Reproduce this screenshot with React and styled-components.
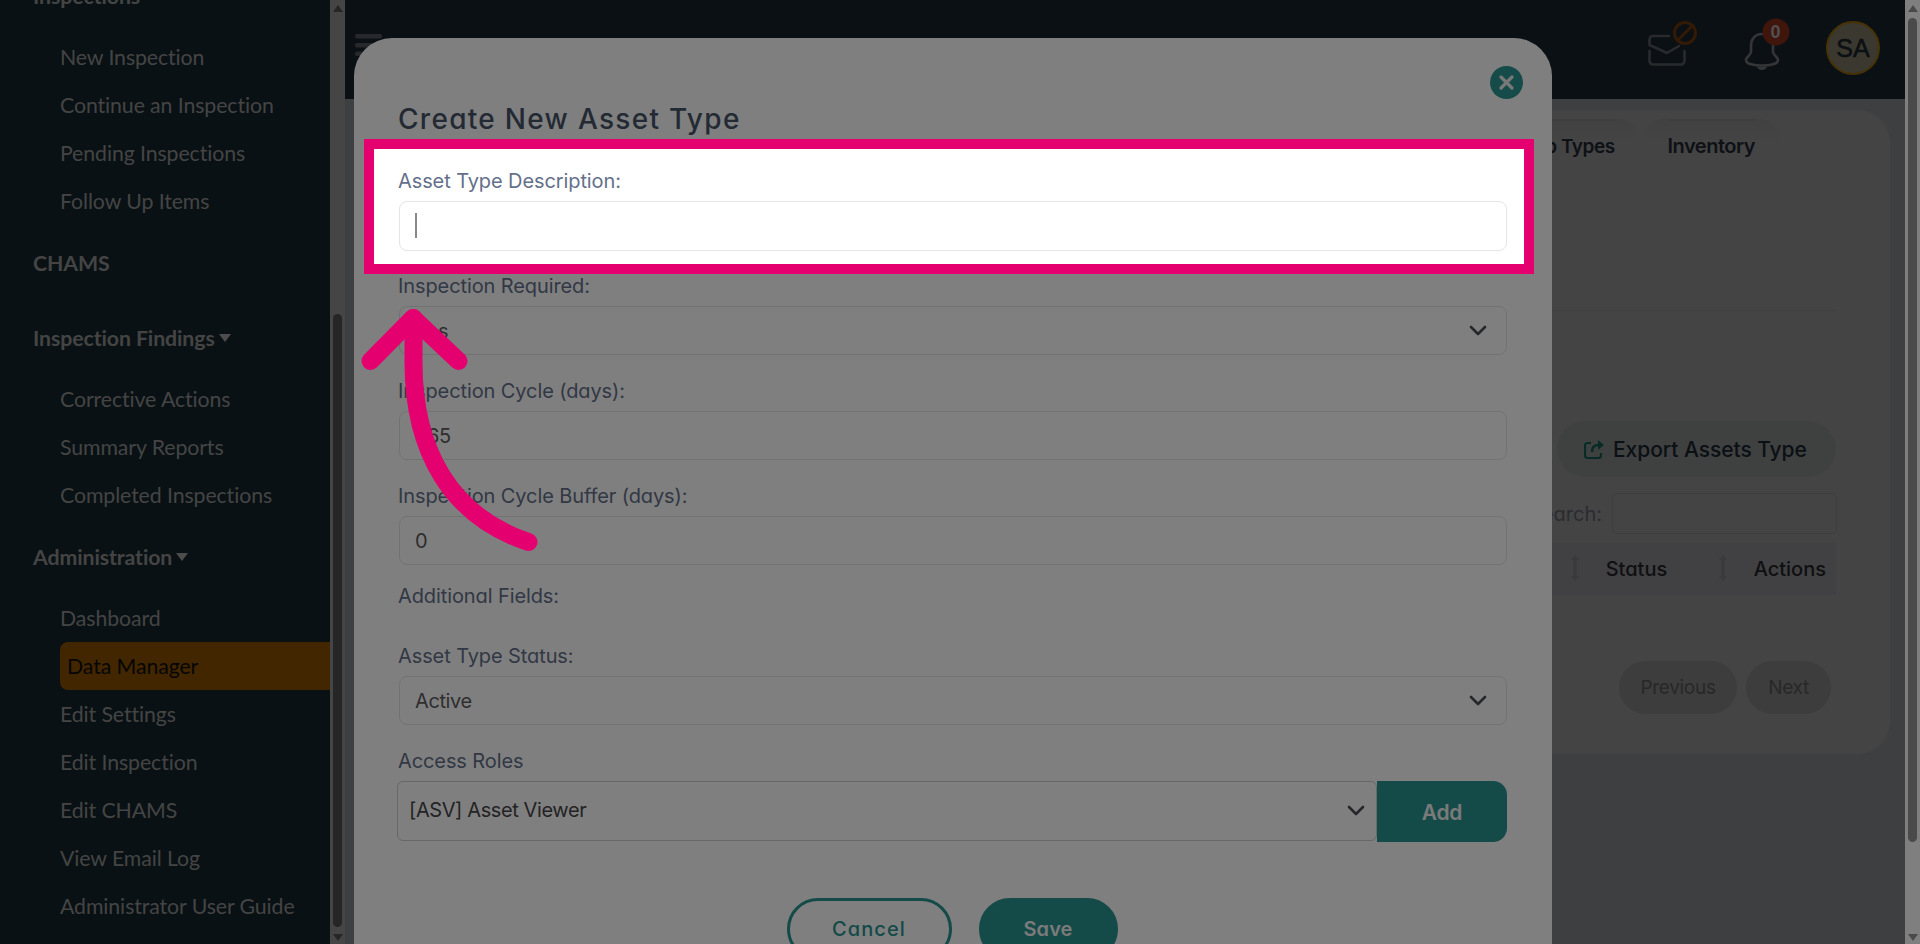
import React from "react";
import styled, { createGlobalStyle } from "styled-components";

const GlobalStyle = createGlobalStyle`
    * {
        box-sizing: border-box;
    }
    body {
        margin: 0;
        overflow: hidden;
        background: #7c7e81;
        font-family: Inter, "Liberation Sans", sans-serif;
        font-feature-settings: "cv11";
    }
    input, select, button {
        font: inherit;
    }
`;

const Screen = styled.div`
    position: relative;
    display: flex;
    width: 1920px;
    height: 944px;
    overflow: hidden;
`;

/* ---------- sidebar ---------- */

const Sidebar = styled.aside`
    width: 330px;
    height: 944px;
    overflow: hidden;
    background: #122228;
    font-family: Lato, sans-serif;
    font-size: 21.3px;
    font-variant-ligatures: none;
    letter-spacing: -0.1px;
    color: #898989;
`;

const Nav = styled.nav`
    margin-top: -42px;
`;

const NavHeading = styled.div`
    display: flex;
    align-items: center;
    gap: 4px;
    height: 75px;
    padding-left: 33px;
    font-weight: 700;
`;

const Caret = styled.span`
    border: 6.5px solid transparent;
    border-top: 8px solid #989898;
    border-bottom: 0;
`;

const NavItem = styled.div`
    display: flex;
    align-items: center;
    height: 48px;
    margin-left: 60px;
    padding-left: ${({ $active }) => ($active ? "7px" : "0")};
    border-radius: 8px 0 0 8px;
    background: ${({ $active }) => ($active ? "#844c00" : "transparent")};
    color: ${({ $active }) => ($active ? "#0c0c0c" : "inherit")};
`;

/* ---------- scrollbars ---------- */

const Scrollbar = styled.div`
    display: flex;
    flex-direction: column;
    align-items: center;
    width: 15px;
    height: 944px;
    padding: 5px 0 3px;
    background: ${({ $track }) => $track};
    color: ${({ $thumb }) => $thumb};
`;

const Arrow = styled.span`
    border: 5px solid transparent;
    border-top: ${({ $up }) => ($up ? "0" : "7px solid currentColor")};
    border-bottom: ${({ $up }) => ($up ? "7px solid currentColor" : "0")};
`;

const Thumb = styled.span`
    width: 9px;
    height: ${({ $height }) => $height};
    margin: ${({ $top }) => $top} 0 auto;
    border-radius: 5px;
    background: currentColor;
`;

/* ---------- page behind the modal ---------- */

const Main = styled.main`
    width: 1560px;
    height: 944px;
`;

const TopBar = styled.header`
    display: flex;
    align-items: center;
    height: 99px;
    padding: 0 25px 0 10px;
    background: #172029;
`;

const MenuIcon = styled.svg`
    margin: -8px auto 0 0;
`;

const MailIcon = styled.svg`
    margin-right: 47px;
    margin-top: -15px;
`;

const BellIcon = styled.svg`
    margin-right: 36px;
    margin-top: -10px;
`;

const Avatar = styled.div`
    display: grid;
    place-items: center;
    width: 54px;
    height: 54px;
    margin-top: -3px;
    border: 2.5px solid #8e6408;
    border-radius: 50%;
    background: #76705e;
    color: #172029;
    font: 400 25px "Liberation Sans", sans-serif;
    letter-spacing: 0;
    -webkit-text-stroke: 0.6px #172029;
`;

const Panel = styled.section`
    display: flex;
    flex-direction: column;
    align-items: flex-end;
    width: 1535px;
    height: 644px;
    margin: 11px 0 0 10px;
    padding: 9px 53px 0;
    border-radius: 32px;
    background: #888888;
`;

const Tabs = styled.div`
    display: flex;
    gap: 7px;
    height: 191px;
    margin-right: 58px;
    align-self: flex-end;
`;

const Tab = styled.div`
    height: 40px;
    padding: ${({ $padding }) => $padding};
    border-radius: 18px 18px 0 0;
    background: linear-gradient(#838383, #888888 22px);
    color: #1c232c;
    font-size: ${({ $size }) => $size};
    font-weight: 600;
    line-height: 51px;
    white-space: nowrap;
    letter-spacing: -0.5px;
    &::before {
        content: "";
        display: block;
        height: 2px;
        background: #7c7c7c;
    }
`;

const Divider = styled.div`
    width: 100%;
    height: 1px;
    background: #818181;
`;

const ExportButton = styled.button`
    display: flex;
    align-items: center;
    gap: 9px;
    width: 279px;
    height: 56px;
    margin: 110px 1px 16px 0;
    padding: 0 0 0 27px;
    border: 0;
    border-radius: 28px;
    background: #7d8280;
    color: #17202b;
    font-size: 21px;
    font-weight: 500;
    white-space: nowrap;
    letter-spacing: -0.05px;
`;

const SearchRow = styled.label`
    display: flex;
    align-items: center;
    gap: 10px;
    color: #555960;
    font-size: 20px;
`;

const SearchInput = styled.input`
    width: 225px;
    height: 41px;
    border: 1px solid #7a7a7a;
    border-radius: 5px;
    background: transparent;
`;

const TableHead = styled.div`
    display: flex;
    align-items: center;
    justify-content: flex-end;
    width: 700px;
    height: 52px;
    margin: 9px 1px 66px 0;
    padding-right: 10px;
    background: #828286;
    color: #202024;
    font-size: 20px;
    font-weight: 500;
`;

const HeadCell = styled.span`
    width: ${({ $width }) => $width};
`;

const SortIcon = styled.svg`
    margin: -3px ${({ $gap }) => $gap} 0 0;
`;

const Pager = styled.div`
    display: flex;
    gap: 9px;
    margin-right: 6px;
`;

const PageButton = styled.button`
    width: ${({ $width }) => $width};
    height: 53px;
    padding: 0;
    border: 0;
    border-radius: 27px;
    background: #7a7a7a;
    color: #505052;
    font-size: 19px;
    letter-spacing: -0.3px;
`;

/* ---------- modal ---------- */

const Modal = styled.div`
    position: absolute;
    top: 38px;
    left: 354px;
    width: 1198px;
    height: 960px;
    padding: 28px 45px 0;
    border-radius: 38px 38px 0 0;
    background: #ffffff;
`;

const CloseButton = styled.button`
    display: block;
    width: 33px;
    height: 33px;
    margin: 0 -16px 0 auto;
    padding: 0;
    border: 0;
    border-radius: 50%;
    background: #2a9892;
    svg {
        display: block;
    }
`;

const Title = styled.h2`
    margin: 2px 0 30px -1px;
    color: #475569;
    font-size: 28px;
    font-weight: 550;
    line-height: 36px;
    letter-spacing: 1.3px;
`;

const Field = styled.div`
    height: 105px;
`;

const Label = styled.div`
    height: 34px;
    margin: ${({ $margin }) => $margin || "0"};
    color: #64708a;
    font-size: 20px;
    font-weight: 430;
    line-height: 29px;
    letter-spacing: -0.1px;
    text-indent: -1px;
`;

const Control = styled.div`
    display: flex;
    align-items: center;
    justify-content: space-between;
    height: ${({ $height }) => $height || "49px"};
    padding: 0 19px 0 15px;
    border: 1px solid #e4e4ea;
    border-radius: 8px;
    color: #5c5c5e;
    font-size: 20px;
    line-height: 1;
    letter-spacing: -0.4px;
`;

const TextCursor = styled.span`
    width: 2px;
    height: 25px;
    margin-top: -2px;
    background: #8a8a8a;
`;

const RoleRow = styled.div`
    display: flex;
    height: 61px;
    margin-left: -2px;
`;

const RoleSelect = styled(Control)`
    flex: 1;
    height: 60px;
    padding: 0 11px 2px;
    border-color: #cfcfd2;
    border-radius: 6px;
    color: #47474a;
`;

const AddButton = styled.button`
    width: 130px;
    padding: 1px 0 0;
    border: 0;
    border-radius: 0 14px 14px 0;
    background: #28958f;
    color: #f4f4f4;
    font-size: 21px;
    font-weight: 600;
    letter-spacing: -0.3px;
`;

const Actions = styled.div`
    display: flex;
    justify-content: center;
    gap: 27px;
    margin: 56px 2px 0 0;
`;

const ActionButton = styled.button`
    width: ${({ $primary }) => ($primary ? "139px" : "165px")};
    height: 62px;
    padding: 0;
    border: 3px solid #28958f;
    border-radius: 31px;
    background: ${({ $primary }) => ($primary ? "#28958f" : "#ffffff")};
    color: ${({ $primary }) => ($primary ? "#f4f4f4" : "#28958f")};
    font-size: 20px;
    font-weight: ${({ $primary }) => ($primary ? 600 : 550)};
    letter-spacing: ${({ $primary }) => ($primary ? "0.1px" : "1.1px")};
`;

/* ---------- tutorial overlay ---------- */

const Spotlight = styled.div`
    position: absolute;
    top: 139px;
    left: 364px;
    width: 1170px;
    height: 135px;
    border: 10px solid #e5006f;
    box-shadow: 0 0 0 2000px rgba(0, 0, 0, 0.5);
`;

const Pointer = styled.svg`
    position: absolute;
    top: 300px;
    left: 355px;
`;

const navSections = [
    {
        title: "Inspections",
        caret: true,
        items: ["New Inspection", "Continue an Inspection", "Pending Inspections", "Follow Up Items"],
    },
    { title: "CHAMS", items: [] },
    {
        title: "Inspection Findings",
        caret: true,
        items: ["Corrective Actions", "Summary Reports", "Completed Inspections"],
    },
    {
        title: "Administration",
        caret: true,
        items: [
            "Dashboard",
            "Data Manager",
            "Edit Settings",
            "Edit Inspection",
            "Edit CHAMS",
            "View Email Log",
            "Administrator User Guide",
        ],
    },
];

function Chevron() {
    return (
        <svg width="18" height="11" viewBox="0 0 18 11" fill="none">
            <path d="M2 2l7 7 7-7" stroke="#4a4e55" strokeWidth="2.6" strokeLinecap="round" strokeLinejoin="round" />
        </svg>
    );
}

function SortHandle({ gap }) {
    return (
        <SortIcon $gap={gap} width="8" height="26" viewBox="0 0 8 26" fill="#747477">
            <path d="M4 0l4 5H5.5v16H8l-4 5-4-5h2.5V5H0z" />
        </SortIcon>
    );
}

function SideNav() {
    return (
        <Sidebar>
            <Nav>
                {navSections.map(section => (
                    <div key={section.title}>
                        <NavHeading>
                            {section.title}
                            {section.caret && <Caret />}
                        </NavHeading>
                        {section.items.map(item => (
                            <NavItem key={item} $active={item === "Data Manager"}>
                                {item}
                            </NavItem>
                        ))}
                    </div>
                ))}
            </Nav>
        </Sidebar>
    );
}

function Header() {
    return (
        <TopBar>
            <MenuIcon width="27" height="23" viewBox="0 0 27 23" fill="#4c5056">
                <rect width="27" height="4.5" rx="2" />
                <rect y="9" width="27" height="4.5" rx="2" />
                <rect y="17.5" width="27" height="4.5" rx="2" />
            </MenuIcon>
            <MailIcon width="50" height="48" viewBox="0 0 50 48" fill="none">
                <g stroke="#50555c" strokeWidth="2.6" strokeLinecap="round" strokeLinejoin="round">
                    <path d="M22 18H6a3.500 3.500 0 0 0-3.500 3.500V27l17.500 8L32 28" />
                    <path d="M2.500 33v10a3.500 3.500 0 0 0 3.500 3.500h28a3.500 3.500 0 0 0 3.500-3.500V33" />
                </g>
                <g stroke="#64340a" strokeWidth="3">
                    <circle cx="38" cy="15" r="10.5" />
                    <path d="M31 22L45 8" />
                </g>
            </MailIcon>
            <BellIcon width="46" height="54" viewBox="0 0 46 54" fill="none">
                <path
                    d="M18 16c-7 0-11 5-11 12v6c0 3-5 5-5 8 0 4 8 5.500 16 5.500S34 46 34 42c0-3-5-5-5-8v-6c0-7-4-12-11-12z"
                    stroke="#676a6e"
                    strokeWidth="2.6"
                />
                <path d="M13 49c2 4 8 4 10 0z" fill="#676a6e" />
                <circle cx="32" cy="14" r="13.5" fill="#7e2a18" />
                <text
                    x="31.5"
                    y="20"
                    textAnchor="middle"
                    fontFamily="Liberation Sans"
                    fontSize="18"
                    fontWeight="700"
                    fill="#a0a0a0"
                >
                    0
                </text>
            </BellIcon>
            <Avatar>SA</Avatar>
        </TopBar>
    );
}

function AssetPanel() {
    return (
        <Panel>
            <Tabs>
                <Tab $size="19px" $padding="0 22px 0 24px">
                    Group Types
                </Tab>
                <Tab $size="20px" $padding="0 24px">
                    Inventory
                </Tab>
            </Tabs>
            <Divider />
            <ExportButton>
                <svg width="20" height="19" viewBox="0 0 20 19" fill="none" stroke="#12574f">
                    <path d="M7 3H3.500A2.500 2.500 0 0 0 1 5.500v10A2.500 2.500 0 0 0 3.500 18h11a2.500 2.500 0 0 0 2.500-2.500V13" strokeWidth="2.2" />
                    <path d="M8 12c0-5 2-7 7-7" strokeWidth="2.6" />
                    <path d="M14 0l6 5-6 5z" fill="#12574f" stroke="none" />
                </svg>
                Export Assets Type
            </ExportButton>
            <SearchRow>
                Search:
                <SearchInput />
            </SearchRow>
            <TableHead>
                <SortHandle gap="27px" />
                <HeadCell $width="113px">Status</HeadCell>
                <SortHandle gap="27px" />
                <HeadCell>Actions</HeadCell>
            </TableHead>
            <Pager>
                <PageButton $width="118px">Previous</PageButton>
                <PageButton $width="85px">Next</PageButton>
            </Pager>
        </Panel>
    );
}

function CreateAssetModal() {
    return (
        <Modal>
            <CloseButton>
                <svg width="33" height="33" viewBox="0 0 33 33">
                    <path d="M11 11l11 11M22 11L11 22" stroke="#f0f0f0" strokeWidth="3.2" strokeLinecap="round" />
                </svg>
            </CloseButton>
            <Title>Create New Asset Type</Title>
            <Field>
                <Label>Asset Type Description:</Label>
                <Control $height="50px">
                    <TextCursor />
                </Control>
            </Field>
            <Field>
                <Label>Inspection Required:</Label>
                <Control>
                    Yes
                    <Chevron />
                </Control>
            </Field>
            <Field>
                <Label>Inspection Cycle (days):</Label>
                <Control>365</Control>
            </Field>
            <Field>
                <Label>Inspection Cycle Buffer (days):</Label>
                <Control>0</Control>
            </Field>
            <Label $margin="-5px 0 26px">Additional Fields:</Label>
            <Field>
                <Label>Asset Type Status:</Label>
                <Control>
                    Active
                    <Chevron />
                </Control>
            </Field>
            <Label>Access Roles</Label>
            <RoleRow>
                <RoleSelect>
                    [ASV] Asset Viewer
                    <Chevron />
                </RoleSelect>
                <AddButton>Add</AddButton>
            </RoleRow>
            <Actions>
                <ActionButton>Cancel</ActionButton>
                <ActionButton $primary>Save</ActionButton>
            </Actions>
        </Modal>
    );
}

export default function App() {
    return (
        <Screen>
            <GlobalStyle />
            <SideNav />
            <Scrollbar $track="#8a8a8a" $thumb="#4c4c4c">
                <Arrow $up />
                <Thumb $top="302px" $height="613px" />
                <Arrow />
            </Scrollbar>
            <Main>
                <Header />
                <AssetPanel />
            </Main>
            <Scrollbar $track="#ffffff" $thumb="#949494">
                <Arrow $up />
                <Thumb $top="6px" $height="824px" />
                <Arrow />
            </Scrollbar>
            <CreateAssetModal />
            <Spotlight />
            <Pointer width="190" height="260" viewBox="0 0 190 260" fill="none">
                <g stroke="#e5006f" strokeWidth="18" strokeLinecap="round" strokeLinejoin="round">
                    <path d="M15.500 61L58 18l45.500 43" />
                    <path d="M58.500 18v44C58.500 150 95 216 173.500 242" />
                </g>
            </Pointer>
        </Screen>
    );
}
